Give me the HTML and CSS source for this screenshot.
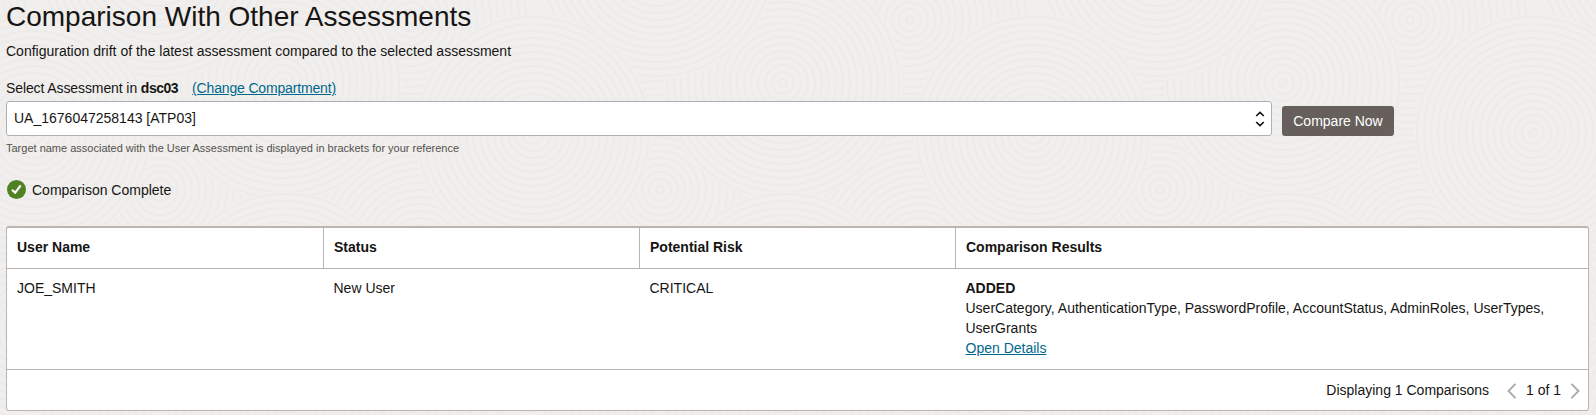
FILE: index.html
```html
<!DOCTYPE html>
<html lang="en">
<head>
<meta charset="utf-8">
<title>Comparison With Other Assessments</title>
<link rel="stylesheet" href="styles.css">
</head>
<body>
<svg class="texture" width="1596" height="415" aria-hidden="true">
  <defs>
    <g id="disc" class="disc">
      <circle class="base" r="119"/>
      <circle r="4"/><circle r="11"/><circle r="18"/><circle r="25"/><circle r="32"/><circle r="39"/><circle r="46"/><circle r="53"/><circle r="60"/><circle r="67"/><circle r="74"/><circle r="81"/><circle r="88"/><circle r="95"/><circle r="102"/><circle r="109"/><circle r="116"/>
    </g>
    <g id="tile">
      <use href="#disc" x="410" y="20"/>
      <use href="#disc" x="160" y="190"/>
      <use href="#disc" x="420" y="250"/>
      <use href="#disc" x="30" y="330"/>
      <use href="#disc" x="283" y="83"/>
      <use href="#disc" x="157" y="-40"/>
      <use href="#disc" x="285" y="310"/>
      <use href="#disc" x="160" y="420"/>
      <use href="#disc" x="410" y="430"/>
      <use href="#disc" x="33" y="133"/>
    </g>
  </defs>
  <use href="#tile" x="-500"/><use href="#tile"/><use href="#tile" x="500"/><use href="#tile" x="1000"/><use href="#tile" x="1500"/>
</svg>
<main class="page">
  <h1 class="title">Comparison With Other Assessments</h1>
  <p class="description">Configuration drift of the latest assessment compared to the selected assessment</p>
  <div class="label"><span>Select Assessment in <b>dsc03</b></span><a class="link" href="#">(Change Compartment)</a></div>
  <div class="picker">
    <div class="select">
      <span>UA_1676047258143 [ATP03]</span>
      <svg width="10" height="16" viewBox="0 0 10 16"><path d="M1.200 5 5 1.400 8.800 5M1.200 11 5 14.600 8.800 11" fill="none" stroke="#161513" stroke-width="1.700"/></svg>
    </div>
    <button class="compare" type="button">Compare Now</button>
  </div>
  <p class="hint">Target name associated with the User Assessment is displayed in brackets for your reference</p>
  <div class="status">
    <svg width="19" height="19" viewBox="0 0 19 19"><circle cx="9.500" cy="9.500" r="9.500" fill="#508223"/><path d="M5 9.700 8.200 12.700 13.700 5.400" fill="none" stroke="#fff" stroke-width="2.200"/></svg>
    <span>Comparison Complete</span>
  </div>
  <section class="table">
    <div class="row head">
      <div>User Name</div><div>Status</div><div>Potential Risk</div><div>Comparison Results</div>
    </div>
    <div class="row body">
      <div>JOE_SMITH</div><div>New User</div><div>CRITICAL</div>
      <div><b>ADDED</b><br>UserCategory, AuthenticationType, PasswordProfile, AccountStatus, AdminRoles, UserTypes, UserGrants<br><a class="link" href="#">Open Details</a></div>
    </div>
    <div class="footer">
      <span class="count">Displaying 1 Comparisons</span>
      <svg width="10" height="16" viewBox="0 0 10 16"><path d="M8.500 .8 1.500 8l7 7.200"/></svg>
      <span class="pages">1 of 1</span>
      <svg width="10" height="16" viewBox="0 0 10 16"><path d="M1.500 .8 8.500 8l-7 7.200"/></svg>
    </div>
  </section>
</main>
</body>
</html>
```
FILE: styles.css
```css
* { box-sizing: border-box; }
body {
  margin: 0;
  height: 415px;
  overflow: hidden;
  background: #f0efed;
  color: #161513;
  font: 14px/20px "Liberation Sans", Arial, sans-serif;
}
.texture { position: absolute; top: 0; left: 0; z-index: -1; }
.disc { fill: none; stroke: #ecebe9; stroke-width: 2; }
.disc .base { fill: #f0efed; stroke: none; }
.page { padding: 0 7px 0 6px; }
.title { margin: 0; height: 41px; padding-top: 1px; font-size: 28px; line-height: 32px; font-weight: 400; }
.description { margin: 0; height: 37px; }
.label { display: flex; gap: 14px; height: 23px; letter-spacing: -.1px; }
.label b { letter-spacing: -.5px; }
.label .link { letter-spacing: -.16px; }
.link { color: #00688c; text-decoration: underline; text-underline-offset: 1px; }
.picker { display: flex; align-items: flex-end; gap: 10px; height: 35px; }
.select {
  display: flex;
  align-items: center;
  justify-content: space-between;
  width: 1266px;
  height: 35px;
  padding: 0 6px 0 7px;
  border: 1px solid #aeb0b8;
  border-radius: 3px;
  background: #fff;
}
.select span { padding-bottom: 2px; }
.compare {
  width: 112px;
  height: 30px;
  padding: 0;
  border: 0;
  border-radius: 3px;
  background: #665f5b;
  color: #fff;
  font: inherit;
}
.hint { margin: 4px 0 0; height: 40px; color: #55514d; font-size: 11px; line-height: 16px; }
.status { display: flex; align-items: center; gap: 6px; height: 20px; padding-left: 1px; }
.status svg { margin-bottom: 2px; }
.table {
  height: 185px;
  margin-top: 26px;
  border: 1px solid #bbb5ae;
  border-top-width: 2px;
  border-radius: 3px;
  background: #fff;
}
.row { display: grid; grid-template-columns: 317px 316px 316px 1fr; }
.head { height: 41px; border-bottom: 1px solid #bbb5ae; font-weight: 700; }
.head div { padding: 9px 10px; border-right: 1px solid #b5b6bd; }
.head div:last-child { border-right: 0; }
.body { height: 101px; border-bottom: 1px solid #b5b6bd; }
.body div { padding: 9px 10px; }
.body div + div { padding-left: 9.500px; }
.footer { display: flex; align-items: center; height: 39px; padding-right: 8px; justify-content: flex-end; }
.footer svg { fill: none; stroke: #a9a9a9; stroke-width: 1.8; margin-top: 3px; }
.count { margin-right: 18px; }
.pages { margin: 0 9px; }
```
